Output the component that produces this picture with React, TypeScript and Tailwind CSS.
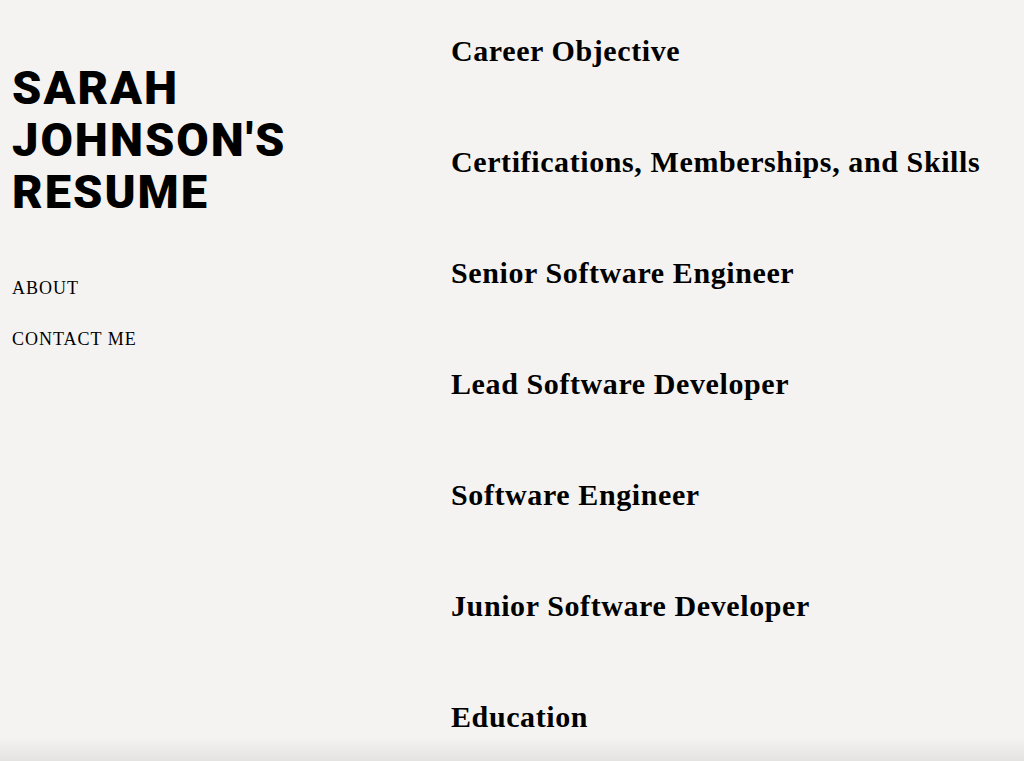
import React from 'react';

const sections = [
  'Career Objective',
  'Certifications, Memberships, and Skills',
  'Senior Software Engineer',
  'Lead Software Developer',
  'Software Engineer',
  'Junior Software Developer',
  'Education',
];

const serif = { fontFamily: '"Liberation Serif", "DejaVu Serif", serif' };

export default function App() {
  return (
    <div className="relative h-[761px] w-[1024px] overflow-hidden bg-[#f4f3f1] text-black">
      <div className="flex">
        <aside className="w-[451px] shrink-0 pl-3 pt-[62px]">
          <h1
            className="text-[47px] font-black leading-[52px] tracking-[2px] text-black"
            style={{ fontFamily: 'Roboto, "Liberation Sans", sans-serif' }}
          >
            SARAH
            <br />
            JOHNSON'S
            <br />
            RESUME
          </h1>
          <nav className="mt-[59px] flex flex-col gap-[29px] text-[18px] leading-[22px] tracking-[1px]" style={serif}>
            <a href="#about">ABOUT</a>
            <a href="#contact">CONTACT ME</a>
          </nav>
        </aside>
        <main className="flex flex-col gap-[77px] pt-[34px]" style={serif}>
          {sections.map((s) => (
            <h2 key={s} className="text-[30px] font-bold leading-[34px] tracking-[0.6px]">
              {s}
            </h2>
          ))}
        </main>
      </div>
      <div className="pointer-events-none absolute inset-x-0 bottom-0 h-6 bg-gradient-to-b from-transparent to-[#e4e3e1]" />
    </div>
  );
}
